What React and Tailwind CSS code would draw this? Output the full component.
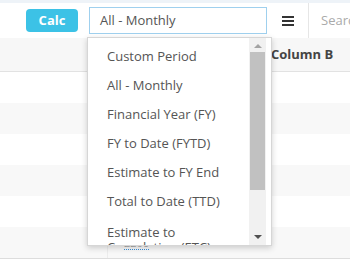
import React from "react";

const items = [
  "Custom Period",
  "All - Monthly",
  "Financial Year (FY)",
  "FY to Date (FYTD)",
  "Estimate to FY End",
  "Total to Date (TTD)",
];

const rows = [0, 1, 2, 3, 4, 5];

export default function App() {
  return (
    <div
      className="relative w-[350px] h-[261px] overflow-hidden bg-white text-[#555]"
      style={{ fontFamily: '"Open Sans", "Noto Sans", sans-serif' }}
    >
      <div className="h-[3px] bg-[#eef3f8]" />
      <div className="h-[35px] flex items-center bg-white">
        <button className="shrink-0 ml-[26px] w-[52px] h-[23px] rounded-[4px] bg-[#3cc2e6] text-white text-[13px] font-bold flex items-center justify-center">
          Calc
        </button>
        <div className="shrink-0 ml-[11px] w-[178px] h-[27px] border border-[#9fd0ee] flex items-center pl-[10px] text-[13px] text-[#555]">
          All - Monthly
        </div>
        <div className="shrink-0 w-[41px] h-full flex items-center justify-center">
          <svg width="14" height="12" viewBox="0 0 14 12">
            <rect x="1" y="1" width="12" height="2" fill="#333" />
            <rect x="1" y="5" width="12" height="2" fill="#333" />
            <rect x="1" y="9" width="12" height="2" fill="#333" />
          </svg>
        </div>
        <div className="shrink-0 h-full border-l border-[#e6e6e6] pl-[12px] flex items-center text-[13px] text-[#aaa]">
          Search
        </div>
      </div>
      <div className="h-[34px] bg-[#f7f7f7] border-b border-[#e2e2e2] flex items-center">
        <div className="w-[262px] shrink-0" />
        <div className="shrink-0 pl-[9px] text-[13px] font-bold text-[#444]">Column B</div>
      </div>
      {rows.map((r) => (
        <div
          key={r}
          className={
            "h-[31px] flex " + (r % 2 === 1 ? "bg-[#f8f8f8]" : "bg-white")
          }
        >
          <div className="w-[108px] border-r border-[#ececec]" />
          <div className="flex-1 flex items-end pl-[16px] pb-[8px]">
            {r === 5 ? (
              <span className="text-[11px] text-[#aaa] border-b border-dotted border-[#3b8fd8] leading-[12px]">
                2206
              </span>
            ) : null}
          </div>
        </div>
      ))}
      <div className="border-t border-[#ddd]" />

      <div className="absolute left-[87px] top-[37px] w-[185px] h-[209px] bg-white border border-[#d6d6d6] shadow-[0_2px_6px_rgba(0,0,0,0.18)] flex overflow-hidden">
        <div className="flex-1 pt-[3px]">
          {items.map((t) => (
            <div
              key={t}
              className="pl-[19px] pr-[4px] h-[29px] flex items-center text-[13px] leading-[16px] text-[#555]"
            >
              {t}
            </div>
          ))}
          <div className="pl-[19px] pr-[4px] pt-[10px] text-[13px] leading-[15px] text-[#555]">
            Estimate to Completion (ETC)
          </div>
        </div>
        <div className="w-[17px] mr-[5px] shrink-0 bg-[#f1f1f1] flex flex-col items-center">
          <div className="h-[14px] flex items-center justify-center">
            <svg width="8" height="5" viewBox="0 0 8 5">
              <polygon points="0,5 4,1 8,5" fill="#a3a3a3" />
            </svg>
          </div>
          <div className="w-[15px] h-[138px] bg-[#c1c1c1]" />
          <div className="flex-1" />
          <div className="h-[16px] flex items-center justify-center">
            <svg width="8" height="5" viewBox="0 0 8 5">
              <polygon points="0,0 8,0 4,4" fill="#505050" />
            </svg>
          </div>
        </div>
      </div>
    </div>
  );
}
